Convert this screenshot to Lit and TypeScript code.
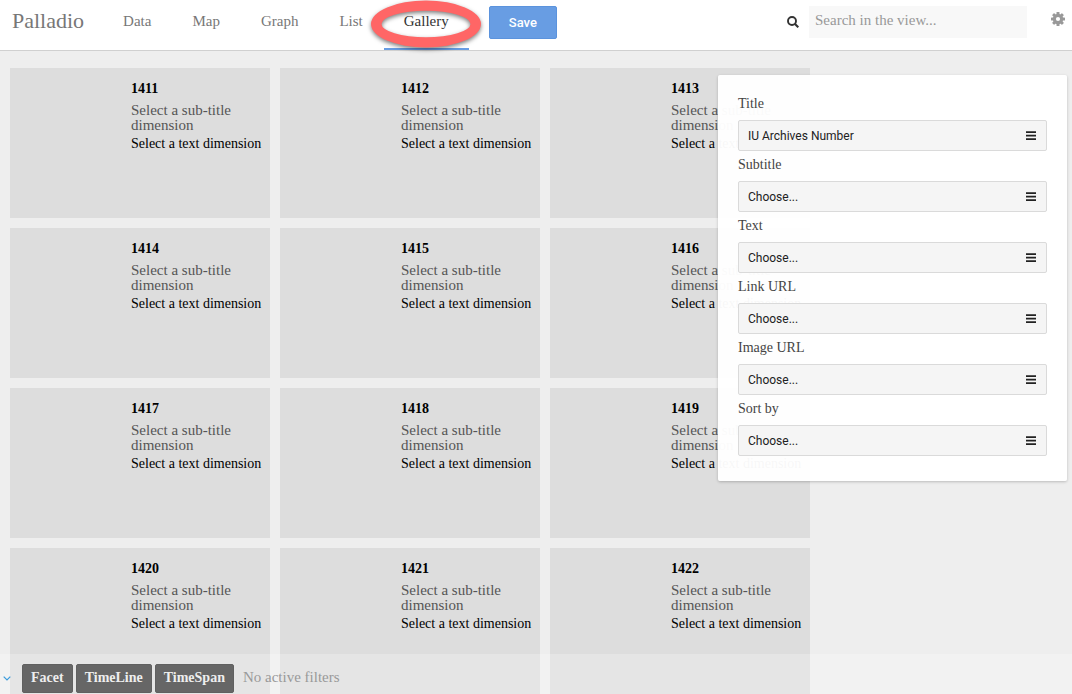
import { LitElement, html, css, svg } from "lit";
import { customElement, property } from "lit/decorators.js";
import { classMap } from "lit/directives/class-map.js";

@customElement("gallery-card")
class GalleryCard extends LitElement {
  @property() heading = "";

  static styles = css`
    :host {
      display: block;
      box-sizing: border-box;
      min-height: 150px;
      padding: 12px 5px 12px 121px;
      background: #ddd;
    }
    .heading {
      margin: 0 0 5px;
      font-size: 14px;
      line-height: 18px;
      font-weight: 700;
      color: #000;
    }
    .subtitle {
      margin: 0 0 3px;
      font-size: 15px;
      line-height: 15px;
      color: #555;
    }
    .text {
      margin: 0;
      font-size: 14px;
      line-height: 16px;
      color: #000;
      white-space: nowrap;
    }
  `;

  render() {
    return html`
      <h2 class="heading">${this.heading}</h2>
      <p class="subtitle">Select a sub-title dimension</p>
      <p class="text">Select a text dimension</p>
    `;
  }
}

@customElement("settings-panel")
class SettingsPanel extends LitElement {
  static styles = css`
    :host {
      display: flex;
      flex-direction: column;
      gap: 5px;
      box-sizing: border-box;
      padding: 20px 20px 25px;
      background: rgba(255, 255, 255, 0.97);
      border-radius: 2px;
      box-shadow: 0 1px 3px rgba(0, 0, 0, 0.22);
    }
    .field {
      display: flex;
      flex-direction: column;
      gap: 7px;
    }
    .label {
      font-size: 14px;
      line-height: 18px;
      color: #444;
    }
    .control {
      display: grid;
      align-items: center;
    }
    .select {
      grid-area: 1 / 1;
      appearance: none;
      width: 100%;
      height: 31px;
      margin: 0;
      padding: 0 32px 0 9px;
      border: 1px solid #dadada;
      border-radius: 2px;
      background: #f5f5f5;
      color: #222;
      font: 12px/18px Roboto, sans-serif;
    }
    .bars {
      grid-area: 1 / 1;
      justify-self: end;
      margin-right: 11px;
      pointer-events: none;
    }
  `;

  private fields = [
    ["title", "Title", "IU Archives Number"],
    ["subtitle", "Subtitle", "Choose..."],
    ["text", "Text", "Choose..."],
    ["link", "Link URL", "Choose..."],
    ["image", "Image URL", "Choose..."],
    ["sort", "Sort by", "Choose..."],
  ];

  render() {
    return this.fields.map(
      ([id, label, value]) => html`
        <div class="field">
          <label class="label" for=${id}>${label}</label>
          <div class="control">
            <select class="select" id=${id}>
              <option>${value}</option>
            </select>
            <svg class="bars" width="10" height="9" viewBox="0 0 10 9" aria-hidden="true">
              <path d="M0 1.150h10M0 4.650h10M0 8.150h10" stroke="#222" stroke-width="1.700" />
            </svg>
          </div>
        </div>
      `
    );
  }
}

@customElement("app-root")
class AppRoot extends LitElement {
  static styles = css`
    :host {
      display: flex;
      flex-direction: column;
      position: relative;
      height: 100vh;
      overflow: hidden;
      background: #eee;
      font-family: "Liberation Serif", serif;
    }
    .header {
      display: flex;
      align-items: flex-start;
      flex: none;
      height: 50px;
      padding: 0 7px 0 12px;
      background: #fff;
      border-bottom: 1px solid #d0d0d0;
    }
    .brand {
      margin-right: 19px;
      font-size: 22px;
      line-height: 42px;
      color: #777;
      text-decoration: none;
    }
    .tabs {
      display: flex;
      flex: none;
      gap: 1px;
    }
    .tab {
      position: relative;
      box-sizing: border-box;
      height: 50px;
      padding: 0 20px;
      border-bottom: 2px solid transparent;
      font-size: 15px;
      line-height: 42px;
      color: #777;
      text-decoration: none;
    }
    .tab.active {
      color: #333;
      border-bottom-color: #689de3;
    }
    .ring {
      position: absolute;
      top: -4px;
      left: 50%;
      margin-left: -60px;
      overflow: visible;
      pointer-events: none;
      z-index: 2;
      filter: drop-shadow(0 2px 2px rgba(0, 0, 0, 0.5));
    }
    .save {
      height: 33px;
      margin: 6px auto 0 20px;
      padding: 0 19px;
      border: 1px solid #5b93dd;
      border-radius: 2px;
      background: #689de3;
      color: #fff;
      font: 500 13px/18px Roboto, sans-serif;
    }
    .search {
      display: flex;
      align-items: center;
      gap: 10px;
      margin: 6px 24px 0 20px;
    }
    .search-input {
      box-sizing: border-box;
      width: 218px;
      height: 32px;
      padding: 0 6px 3px;
      border: 0;
      background: #f8f8f8;
      color: #333;
      font: 15px/18px "Liberation Serif", serif;
    }
    .search-input::placeholder {
      color: #999;
      opacity: 1;
    }
    .icon-button {
      display: flex;
      padding: 0;
      border: 0;
      background: none;
    }
    .gear {
      margin-top: 12px;
    }
    .gallery {
      display: grid;
      flex: 1;
      grid-template-columns: repeat(auto-fill, 260px);
      align-content: start;
      gap: 10px;
      padding: 17px 10px 0;
    }
    .settings {
      position: absolute;
      top: 75px;
      right: 5px;
      width: 349px;
    }
    .filters {
      position: absolute;
      left: 0;
      right: 0;
      bottom: 0;
      display: flex;
      align-items: center;
      gap: 3px;
      box-sizing: border-box;
      height: 40px;
      padding: 8px 3px 0;
      background: rgba(255, 255, 255, 0.25);
    }
    .collapse {
      margin-right: 8px;
    }
    .filter {
      height: 29px;
      padding: 0 8px;
      border: 1px solid #606060;
      border-radius: 2px;
      background: #666;
      color: #eee;
      font: 700 14px/18px "Liberation Serif", serif;
    }
    .status {
      padding: 0 6px 3px;
      font-size: 15px;
      line-height: 18px;
      color: #999;
    }
  `;

  private tabs = ["Data", "Map", "Graph", "List", "Gallery"];
  private active = "Gallery";
  private items = Array.from({ length: 12 }, (_, i) => String(1411 + i));

  private gearTeeth() {
    return [0, 45, 90, 135].map(
      (a) => svg`<rect x="5.5" y="0" width="3" height="14" rx="0.6" transform="rotate(${a} 7 7)" />`
    );
  }

  render() {
    return html`
      <header class="header">
        <a class="brand" href="#">Palladio</a>
        <nav class="tabs">
          ${this.tabs.map(
            (t) => html`<a class=${classMap({ tab: true, active: t === this.active })} href="#${t}">${t}${
              t === this.active
                ? html`<svg class="ring" width="120" height="56" viewBox="0 0 120 56" aria-hidden="true">
                    <path
                      fill="#ff6666"
                      fill-rule="evenodd"
                      d="M5 28a55 23.5 0 1 0 110 0a55 23.5 0 1 0 -110 0zM15.500 28a44.500 13.200 0 1 0 89 0a44.500 13.200 0 1 0 -89 0z"
                    />
                  </svg>`
                : ""
            }</a>`
          )}
        </nav>
        <button class="save">Save</button>
        <form class="search" role="search">
          <svg width="12" height="12" viewBox="0 0 12 12" fill="none" stroke="#333" aria-hidden="true">
            <circle cx="5" cy="5" r="4" stroke-width="1.9" />
            <path d="M8 8l3.300 3.300" stroke-width="2.100" />
          </svg>
          <input class="search-input" type="text" placeholder="Search in the view..." aria-label="Search in the view" />
        </form>
        <button class="icon-button gear" aria-label="Settings">
          <svg width="14" height="14" viewBox="0 0 14 14" fill="#999">
            ${this.gearTeeth()}
            <circle cx="7" cy="7" r="5.2" />
            <circle cx="7" cy="7" r="2.100" fill="#fff" />
          </svg>
        </button>
      </header>
      <main class="gallery">
        ${this.items.map((n) => html`<gallery-card heading=${n}></gallery-card>`)}
      </main>
      <settings-panel class="settings"></settings-panel>
      <footer class="filters">
        <button class="icon-button collapse" aria-label="Collapse filters">
          <svg width="8" height="5" viewBox="0 0 8 5" fill="none" stroke="#3a9bdc" stroke-width="1.200">
            <path d="M0.700 0.700L4 4L7.300 0.700" />
          </svg>
        </button>
        <button class="filter">Facet</button>
        <button class="filter">TimeLine</button>
        <button class="filter">TimeSpan</button>
        <span class="status">No active filters</span>
      </footer>
    `;
  }
}
